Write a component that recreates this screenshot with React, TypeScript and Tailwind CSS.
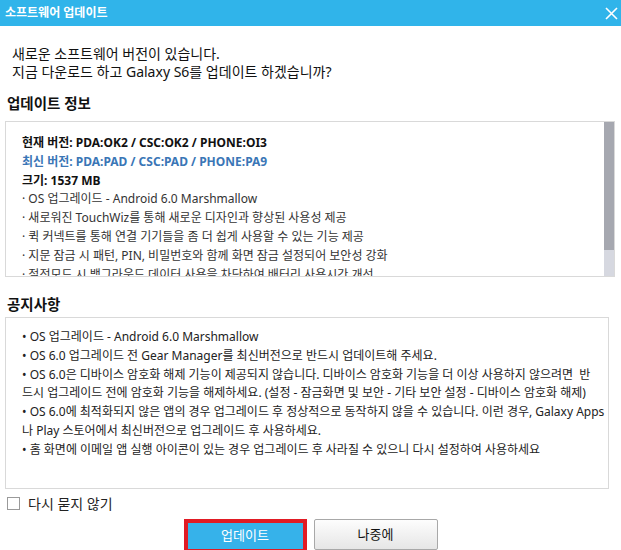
import React from "react";

const infoItems = [
  "OS 업그레이드 - Android 6.0 Marshmallow",
  "새로워진 TouchWiz를 통해 새로운 디자인과 향상된 사용성 제공",
  "퀵 커넥트를 통해 연결 기기들을 좀 더 쉽게 사용할 수 있는 기능 제공",
  "지문 잠금 시 패턴, PIN, 비밀번호와 함께 화면 잠금 설정되어 보안성 강화",
  "절전모드 시 백그라운드 데이터 사용을 차단하여 배터리 사용시간 개선",
];

const noticeLines: { bullet: boolean; text: string }[] = [
  { bullet: true, text: "OS 업그레이드 - Android 6.0 Marshmallow" },
  { bullet: true, text: "OS 6.0 업그레이드 전 Gear Manager를 최신버전으로 반드시 업데이트해 주세요." },
  { bullet: true, text: "OS 6.0은 디바이스 암호화 해제 기능이 제공되지 않습니다. 디바이스 암호화 기능을 더 이상 사용하지 않으려면  반" },
  { bullet: false, text: "드시 업그레이드 전에 암호화 기능을 해제하세요. (설정 - 잠금화면 및 보안 - 기타 보안 설정 - 디바이스 암호화 해제)" },
  { bullet: true, text: "OS 6.0에 최적화되지 않은 앱의 경우 업그레이드 후 정상적으로 동작하지 않을 수 있습니다. 이런 경우, Galaxy Apps" },
  { bullet: false, text: "나 Play 스토어에서 최신버전으로 업그레이드 후 사용하세요." },
  { bullet: true, text: "홈 화면에 이메일 앱 실행 아이콘이 있는 경우 업그레이드 후 사라질 수 있으니 다시 설정하여 사용하세요" },
];

export default function App() {
  return (
    <div
      className="w-[621px] h-[550px] overflow-hidden bg-white text-[#111]"
      style={{ fontFamily: "'Noto Sans', 'Noto Sans CJK KR', sans-serif" }}
    >
      <div className="h-[26px] bg-[#30b4ea] flex items-center justify-between pl-[5px] pr-[3px]">
        <span className="text-white font-bold text-[12px] leading-none">소프트웨어 업데이트</span>
        <svg width="13" height="13" viewBox="0 0 13 13">
          <path d="M1 1 L12 12 M12 1 L1 12" stroke="white" strokeWidth="1.6" />
        </svg>
      </div>

      <div className="mt-[19px] pl-[12px] text-[14px] leading-[18px]">
        <div>새로운 소프트웨어 버전이 있습니다.</div>
        <div>지금 다운로드 하고 Galaxy S6를 업데이트 하겠습니까?</div>
      </div>

      <div className="mt-[13px] pl-[7px] text-[14.5px] font-bold leading-[18px]">업데이트 정보</div>

      <div className="mt-[9px] ml-[5px] w-[610px] h-[156px] border border-[#d9d9d9] relative overflow-hidden">
        <div className="pl-[16px] pt-[12px] text-[12px] leading-[18.8px]">
          <div className="font-bold text-[#111]">현재 버전: PDA:OK2 / CSC:OK2 / PHONE:OI3</div>
          <div className="font-bold text-[#3a76b6]">최신 버전: PDA:PAD / CSC:PAD / PHONE:PA9</div>
          <div className="font-bold text-[#111]">크기: 1537 MB</div>
          {infoItems.map((t) => (
            <div key={t} className="text-[#333]">
              · {t}
            </div>
          ))}
        </div>
        <div className="absolute right-0 top-0 bottom-0 w-[10px] bg-[#d6d8e0]">
          <div className="h-[128px] bg-[#a6a8b0]" />
        </div>
      </div>

      <div className="mt-[19px] pl-[7px] text-[14.5px] font-bold leading-[17px]">공지사항</div>

      <div className="mt-[4px] ml-[5px] w-[604px] h-[172px] border border-[#d9d9d9] pl-[16px] pt-[10px] text-[12px] leading-[18.8px] text-[#222] overflow-hidden">
        {noticeLines.map((l, i) => (
          <div key={i} className="whitespace-pre">
            {l.bullet ? "• " : ""}
            {l.text}
          </div>
        ))}
      </div>

      <div className="mt-[6px] ml-[7px] flex items-center gap-[8px] h-[17px]">
        <div className="w-[13px] h-[13px] border border-[#9a9a9a] bg-white" />
        <span className="text-[14px] text-[#222]">다시 묻지 않기</span>
      </div>

      <div className="mt-[7px] flex justify-center gap-[7px]">
        <div className="w-[123px] h-[34px] border-4 border-[#e11b24] bg-[#36b2ea] flex items-center justify-center text-white text-[13px]">
          업데이트
        </div>
        <div className="w-[124px] h-[31px] border border-[#a8a8a8] rounded-[2px] bg-gradient-to-b from-[#fdfdfd] to-[#e6e6e6] flex items-center justify-center text-[13px] text-[#111]">
          나중에
        </div>
      </div>
    </div>
  );
}
